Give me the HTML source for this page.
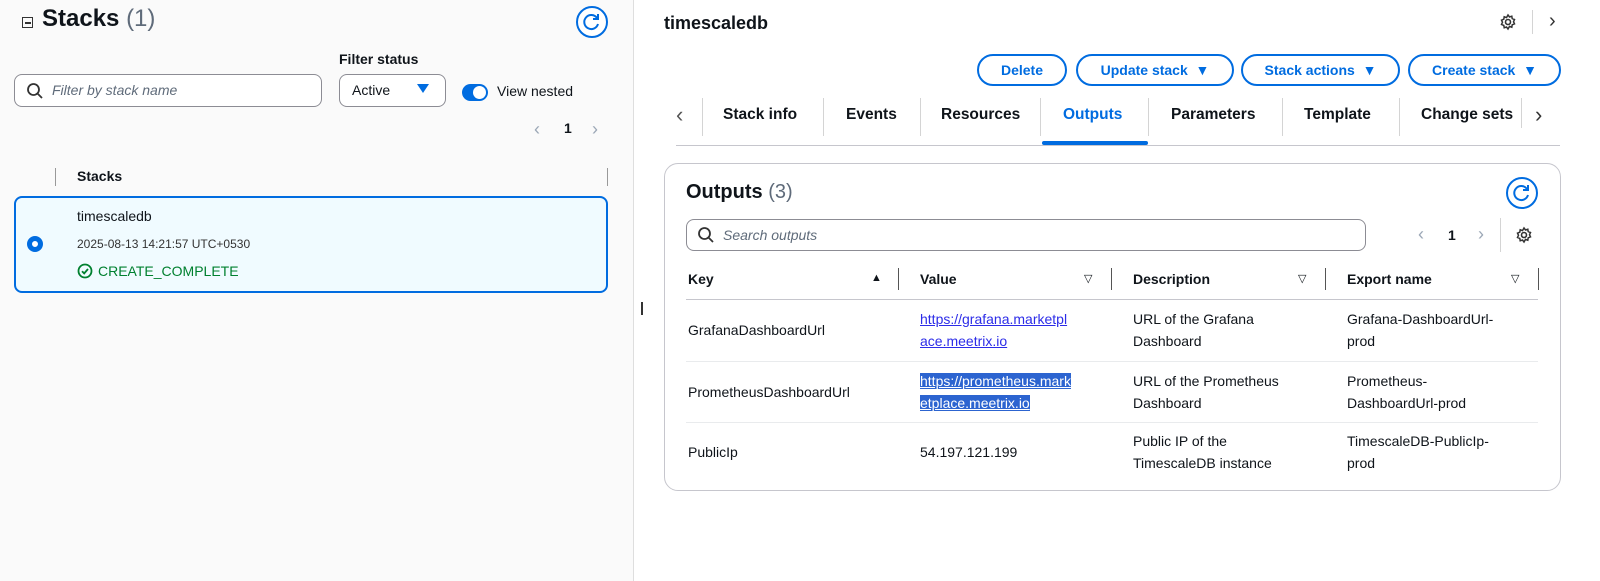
<!DOCTYPE html>
<html><head><meta charset="utf-8"><style>
*{box-sizing:border-box;margin:0;padding:0}
body{width:1600px;height:581px;background:#fff;font-family:"Liberation Sans",sans-serif;color:#0f141a;position:relative;overflow:hidden;font-size:14px}
.a{position:absolute;white-space:nowrap}
.left{position:absolute;left:0;top:0;width:634px;height:581px;background:#fafafa;border-right:1px solid #dedede}
.btn{position:absolute;top:54px;height:32px;border:2px solid #006ce0;border-radius:16px;color:#006ce0;font-weight:bold;font-size:14px;display:flex;align-items:center;justify-content:center;background:#fff}
.tab{position:absolute;top:106px;font-size:15.5px;font-weight:bold;color:#0f141a}
.sep{position:absolute;width:1px;background:#d4d4d4}
.th{position:absolute;top:271px;font-weight:bold;font-size:14px}
.td{position:absolute;font-size:14px;line-height:22px}
a{color:#2c2ce8;text-decoration:underline}
.refresh{position:absolute;width:32px;height:32px;border:2px solid #006ce0;border-radius:50%;background:#fff}
</style></head><body>
<div class="left">
 <div class="a" style="left:22px;top:17px;width:11px;height:11px;border:1.5px solid #333"></div>
 <div class="a" style="left:25px;top:22px;width:6px;height:1.5px;background:#333"></div>
 <div class="a" style="left:42px;top:5px;font-size:24px;font-weight:bold">Stacks <span style="font-weight:normal;color:#5f6b7a">(1)</span></div>
 <div class="refresh" style="left:576px;top:6px"><svg width="28" height="28" viewBox="0 0 28 28" style="position:absolute;left:0;top:0"><path d="M19 10a7 7 0 1 0 1 6" fill="none" stroke="#006ce0" stroke-width="2"/><path d="M20 6v5h-5" fill="none" stroke="#006ce0" stroke-width="2"/></svg></div>
 <div class="a" style="left:339px;top:51px;font-weight:bold;font-size:14px">Filter status</div>
 <div class="a" style="left:14px;top:74px;width:308px;height:33px;border:1px solid #8c8c94;border-radius:8px;background:#fff"></div>
 <svg class="a" style="left:26px;top:82px" width="18" height="18"><circle cx="7.5" cy="7.5" r="5.5" fill="none" stroke="#333" stroke-width="1.8"/><path d="M11.5 11.5L16 16" stroke="#333" stroke-width="1.8"/></svg>
 <div class="a" style="left:52px;top:82px;font-style:italic;color:#5f6b7a">Filter by stack name</div>
 <div class="a" style="left:339px;top:74px;width:107px;height:33px;border:1px solid #8c8c94;border-radius:8px;background:#fff"></div>
 <div class="a" style="left:352px;top:82px">Active</div>
 <div class="a" style="left:417px;top:84px;width:0;height:0;border-left:6px solid transparent;border-right:6px solid transparent;border-top:9px solid #006ce0"></div>
 <div class="a" style="left:462px;top:84px;width:26px;height:17px;border-radius:9px;background:#006ce0"></div>
 <div class="a" style="left:473px;top:86px;width:13px;height:13px;border-radius:50%;background:#fff"></div>
 <div class="a" style="left:497px;top:83px">View nested</div>
 <div class="a" style="left:534px;top:119px;color:#9ba7b6;font-size:18px">‹</div>
 <div class="a" style="left:564px;top:120px;font-weight:bold">1</div>
 <div class="a" style="left:592px;top:119px;color:#9ba7b6;font-size:18px">›</div>
 <div class="sep" style="left:55px;top:168px;height:18px;background:#999"></div>
 <div class="sep" style="left:607px;top:168px;height:18px;background:#999"></div>
 <div class="a" style="left:77px;top:168px;font-weight:bold">Stacks</div>
 <div class="a" style="left:14px;top:196px;width:594px;height:97px;border:2px solid #006ce0;border-radius:8px;background:#f0fbff"></div>
 <div class="a" style="left:27px;top:236px;width:16px;height:16px;border-radius:50%;border:5px solid #006ce0;background:#fff"></div>
 <div class="a" style="left:77px;top:208px;font-size:14px">timescaledb</div>
 <div class="a" style="left:77px;top:237px;font-size:12px;color:#333">2025-08-13 14:21:57 UTC+0530</div>
 <svg class="a" style="left:77px;top:263px" width="16" height="16"><circle cx="8" cy="8" r="6.5" fill="none" stroke="#00802f" stroke-width="1.8"/><path d="M5 8.2l2.2 2.2L11 6" fill="none" stroke="#00802f" stroke-width="1.8"/></svg>
 <div class="a" style="left:98px;top:263px;color:#00802f">CREATE_COMPLETE</div>
</div>
<div class="a" style="left:641px;top:302px;width:2px;height:13px;background:#333"></div>

<div class="a" style="left:664px;top:13px;font-size:18px;font-weight:bold">timescaledb</div>
<svg class="a" style="left:1499px;top:13px" width="18" height="18" viewBox="0 0 18 18"><circle cx="9" cy="9" r="2.5" fill="none" stroke="#333" stroke-width="1.6"/><path d="M9 2l1.5 2 2.3-.8.4 2.4 2.3.9-1 2.2 1 2.2-2.3.9-.4 2.4-2.3-.8L9 16l-1.5-2-2.3.8-.4-2.4-2.3-.9 1-2.2-1-2.2 2.3-.9.4-2.4 2.3.8z" fill="none" stroke="#333" stroke-width="1.5"/></svg>
<div class="sep" style="left:1532px;top:10px;height:24px"></div>
<div class="a" style="left:1549px;top:10px;font-size:20px;color:#333">›</div>

<div class="btn" style="left:977px;width:90px">Delete</div>
<div class="btn" style="left:1076px;width:158px">Update stack&nbsp;&nbsp;▼</div>
<div class="btn" style="left:1241px;width:159px">Stack actions&nbsp;&nbsp;▼</div>
<div class="btn" style="left:1408px;width:153px">Create stack&nbsp;&nbsp;▼</div>

<div class="a" style="left:676px;top:102px;font-size:22px;color:#555">‹</div>
<div class="sep" style="left:702px;top:98px;height:38px"></div>
<div class="tab" style="left:723px">Stack info</div>
<div class="sep" style="left:823px;top:98px;height:38px"></div>
<div class="tab" style="left:846px">Events</div>
<div class="sep" style="left:920px;top:98px;height:38px"></div>
<div class="tab" style="left:941px">Resources</div>
<div class="sep" style="left:1040px;top:98px;height:38px"></div>
<div class="tab" style="left:1063px;color:#006ce0">Outputs</div>
<div class="sep" style="left:1148px;top:98px;height:38px"></div>
<div class="tab" style="left:1171px">Parameters</div>
<div class="sep" style="left:1282px;top:98px;height:38px"></div>
<div class="tab" style="left:1304px">Template</div>
<div class="sep" style="left:1399px;top:98px;height:38px"></div>
<div class="tab" style="left:1421px">Change sets</div>
<div class="sep" style="left:1521px;top:98px;height:30px"></div>
<div class="a" style="left:1535px;top:102px;font-size:22px;color:#333">›</div>
<div class="a" style="left:676px;top:145px;width:884px;height:1px;background:#c6c6cd"></div>
<div class="a" style="left:1042px;top:141px;width:106px;height:4px;background:#006ce0;border-radius:2px"></div>

<div class="a" style="left:664px;top:163px;width:897px;height:328px;border:1px solid #c6c6cd;border-radius:14px;background:#fff"></div>
<div class="a" style="left:686px;top:181px;font-size:20px;font-weight:bold">Outputs <span style="font-weight:normal;color:#5f6b7a">(3)</span></div>
<div class="refresh" style="left:1506px;top:177px"><svg width="28" height="28" viewBox="0 0 28 28" style="position:absolute;left:0;top:0"><path d="M19 10a7 7 0 1 0 1 6" fill="none" stroke="#006ce0" stroke-width="2"/><path d="M20 6v5h-5" fill="none" stroke="#006ce0" stroke-width="2"/></svg></div>
<div class="a" style="left:686px;top:219px;width:680px;height:32px;border:1px solid #8c8c94;border-radius:8px"></div>
<svg class="a" style="left:697px;top:226px" width="18" height="18"><circle cx="7.5" cy="7.5" r="5.5" fill="none" stroke="#333" stroke-width="1.8"/><path d="M11.5 11.5L16 16" stroke="#333" stroke-width="1.8"/></svg>
<div class="a" style="left:723px;top:227px;font-style:italic;color:#5f6b7a">Search outputs</div>
<div class="a" style="left:1418px;top:224px;color:#9ba7b6;font-size:18px">‹</div>
<div class="a" style="left:1448px;top:227px;font-weight:bold">1</div>
<div class="a" style="left:1478px;top:224px;color:#9ba7b6;font-size:18px">›</div>
<div class="sep" style="left:1500px;top:218px;height:34px"></div>
<svg class="a" style="left:1515px;top:226px" width="18" height="18" viewBox="0 0 18 18"><circle cx="9" cy="9" r="2.5" fill="none" stroke="#333" stroke-width="1.6"/><path d="M9 2l1.5 2 2.3-.8.4 2.4 2.3.9-1 2.2 1 2.2-2.3.9-.4 2.4-2.3-.8L9 16l-1.5-2-2.3.8-.4-2.4-2.3-.9 1-2.2-1-2.2 2.3-.9.4-2.4 2.3.8z" fill="none" stroke="#333" stroke-width="1.5"/></svg>

<div class="th" style="left:688px">Key</div><div class="a" style="left:871px;top:272px;font-size:11px">▲</div>
<div class="sep" style="left:898px;top:268px;height:22px;background:#555"></div>
<div class="th" style="left:920px">Value</div><div class="a" style="left:1084px;top:272px;font-size:11px">▽</div>
<div class="sep" style="left:1111px;top:268px;height:22px;background:#555"></div>
<div class="th" style="left:1133px">Description</div><div class="a" style="left:1298px;top:272px;font-size:11px">▽</div>
<div class="sep" style="left:1325px;top:268px;height:22px;background:#555"></div>
<div class="th" style="left:1347px">Export name</div><div class="a" style="left:1511px;top:272px;font-size:11px">▽</div>
<div class="sep" style="left:1538px;top:268px;height:22px;background:#555"></div>
<div class="a" style="left:686px;top:299px;width:852px;height:1px;background:#c6c6cd"></div>
<div class="a" style="left:686px;top:361px;width:852px;height:1px;background:#e9ebed"></div>
<div class="a" style="left:686px;top:422px;width:852px;height:1px;background:#e9ebed"></div>

<div class="td" style="left:688px;top:319px">GrafanaDashboardUrl</div>
<div class="td" style="left:920px;top:308px"><a>https://grafana.marketpl</a><br><a>ace.meetrix.io</a></div>
<div class="td" style="left:1133px;top:308px">URL of the Grafana<br>Dashboard</div>
<div class="td" style="left:1347px;top:308px">Grafana-DashboardUrl-<br>prod</div>

<div class="td" style="left:688px;top:381px">PrometheusDashboardUrl</div>
<div class="td" style="left:920px;top:370px"><a style="background:#2c64d0;color:#fff">https://prometheus.mark</a><br><a style="background:#2c64d0;color:#fff">etplace.meetrix.io</a></div>
<div class="td" style="left:1133px;top:370px">URL of the Prometheus<br>Dashboard</div>
<div class="td" style="left:1347px;top:370px">Prometheus-<br>DashboardUrl-prod</div>

<div class="td" style="left:688px;top:441px">PublicIp</div>
<div class="td" style="left:920px;top:441px">54.197.121.199</div>
<div class="td" style="left:1133px;top:430px">Public IP of the<br>TimescaleDB instance</div>
<div class="td" style="left:1347px;top:430px">TimescaleDB-PublicIp-<br>prod</div>
</body></html>
